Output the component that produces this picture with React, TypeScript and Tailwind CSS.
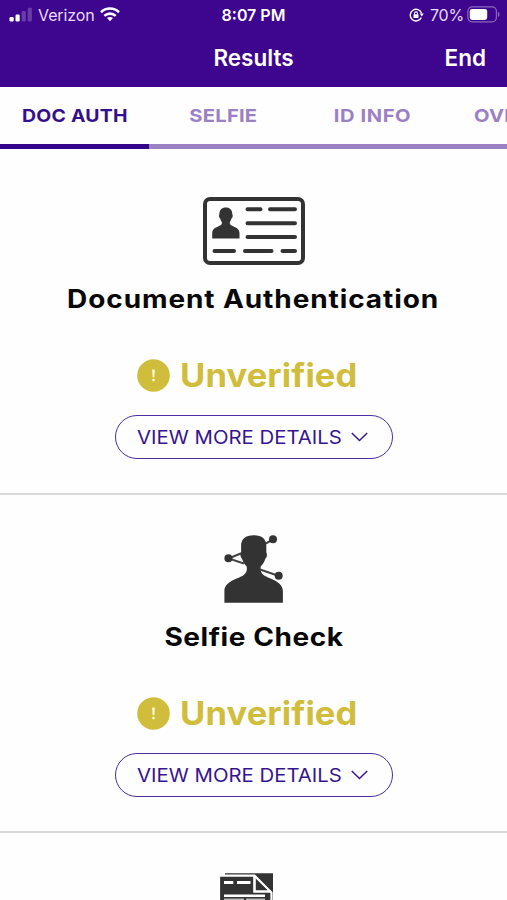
import clsx from "clsx";
import type { ComponentType } from "react";
import { useState } from "react";

type Tab = {
  id: string;
  label: string;
  className: string;
};

type Check = {
  id: string;
  title: string;
  titleClass: string;
  icon: ComponentType;
};

const tabs: Tab[] = [
  { id: "doc", label: "DOC AUTH", className: "scale-x-[1.08] tracking-[0.2px]" },
  { id: "selfie", label: "SELFIE", className: "scale-x-[1.12] tracking-[0.2px]" },
  { id: "info", label: "ID INFO", className: "scale-x-[1.12] tracking-[0.5px]" },
  { id: "overall", label: "OVERALL", className: "scale-x-[1.12] tracking-[0.2px]" },
];

function SignalIcon() {
  return (
    <svg width="24" height="16" viewBox="0 0 24 16" fill="#fff">
      <rect x="0.5" y="10" width="4.2" height="4.5" rx="1.2" />
      <rect x="6.5" y="7.6" width="4.2" height="6.9" rx="1.2" />
      <rect x="12.7" y="4" width="4.2" height="10.5" rx="1.2" opacity="0.22" />
      <rect x="18.7" y="0.8" width="4.2" height="13.7" rx="1.2" opacity="0.22" />
    </svg>
  );
}

function WifiIcon() {
  return (
    <svg width="20" height="15" viewBox="0 0 20 15" fill="none" stroke="#fff" strokeWidth="2.6">
      <path d="M1 5.2C6 0.3 14 0.3 19 5.2" />
      <path d="M4.3 8.9C7.6 5.9 12.4 5.9 15.7 8.9" />
      <path d="M7 11.1C8.8 9.7 11.2 9.7 13 11.1L10 14.2Z" fill="#fff" stroke="none" />
    </svg>
  );
}

function RotationLockIcon() {
  return (
    <svg width="15" height="14" viewBox="0 0 15 14" fill="none" stroke="#fff" strokeWidth="1.4">
      <path d="M12.3 9.6A5.8 5.8 0 1 1 12.6 5.4" />
      <path d="M10.6 5.6H14.8L12.8 8.6Z" fill="#fff" stroke="none" />
      <rect x="4.5" y="6.2" width="5" height="3.7" rx="0.5" fill="#fff" stroke="none" />
      <path d="M5.5 6.4V5.4a1.5 1.5 0 0 1 3 0v1" strokeWidth="1.1" />
    </svg>
  );
}

function BatteryIcon() {
  return (
    <svg width="33" height="17" viewBox="0 0 33 17" fill="none">
      <rect x="0.9" y="0.9" width="28.5" height="15" rx="4.3" stroke="#fff" strokeOpacity="0.4" strokeWidth="1.2" />
      <rect x="2.8" y="2.9" width="17.4" height="11" rx="2.4" fill="#fff" />
      <path d="M31 5.8c2 0.8 2 4.4 0 5.2z" fill="#fff" opacity="0.4" />
    </svg>
  );
}

function IdCardIcon() {
  return (
    <svg width="102" height="68" viewBox="0 0 102 68" fill="none" stroke="#333" strokeLinecap="round">
      <rect x="2" y="2" width="98" height="64" rx="5" strokeWidth="4" />
      <path
        d="M22.8 10.5c4 0 6.6 2.7 6.5 6.8 1 1.3 0.3 3.5-0.8 4.1-0.4 2-1.7 3-1.8 4.4-0.2 4.4 9.8 3.3 9.8 10.2v5.5H9.2V36c0-6.9 10-5.8 9.8-10.2-0.1-1.4-1.4-2.4-1.8-4.4-1.1-0.6-1.8-2.8-0.8-4.1-0.1-4.1 2.4-6.8 6.4-6.8z"
        fill="#333"
        stroke="none"
      />
      <path
        d="M44.5 12.2H57.5M67 12.2H92M44.5 26.2H92M44.5 40H92M11.5 54H31M42 54H68.5M79.5 54H92"
        strokeWidth="4"
      />
    </svg>
  );
}

function SelfieIcon() {
  return (
    <svg width="60" height="69" viewBox="0 0 60 69" fill="#333">
      <path d="M28 17L49 5.5M18 19L4.5 24.5L20 29.5M36 35.5L55 42" fill="none" stroke="#444" strokeWidth="2" />
      <circle cx="49" cy="5.2" r="4" />
      <circle cx="4.4" cy="24.3" r="4" />
      <circle cx="54.7" cy="41.7" r="4" />
      <path d="M29.7 1.2C38 1.2 42.4 5 42.3 12V18.5c1.2 1.5 0.7 5-1 6.2-0.9 3-2.4 5.6-4.6 7.8-0.5 4 0 6.5 3.2 8.7 5.3 3.8 19 5.8 19 15.8V68.7H0.4V57c0-10 13.7-12 19-15.8 3.2-2.2 3.8-4.7 3.3-8.7-2.2-2.2-3.7-4.8-4.6-7.8-1.7-1.2-2.2-4.7-1-6.2V12C17 5 21.4 1.2 29.7 1.2z" />
    </svg>
  );
}

function FormsIcon() {
  return (
    <svg width="54" height="70" viewBox="0 0 54 70" fill="none">
      <path d="M5 1.2H53V66H5z" fill="#333" />
      <path d="M-1 3.7H34.5L51.5 20.8V70H-1z" fill="#333" stroke="#fff" strokeWidth="2.2" />
      <path d="M34.5 4V19.5H51" stroke="#fff" strokeWidth="2.6" />
      <path d="M37 8.5L47.2 18H37z" fill="#333" />
      <path d="M4 10.6H13.3M17 10.6H30.5" stroke="#fff" strokeWidth="3" />
      <path d="M4 23.7H45" stroke="#fff" strokeWidth="2.6" />
      <path d="M4 28H24M26 28H45" stroke="#bbb" strokeWidth="3" />
      <path d="M4 35H45M4 42H45" stroke="#fff" strokeWidth="2.6" />
    </svg>
  );
}

const checks: Check[] = [
  { id: "doc", title: "Document Authentication", titleClass: "tracking-[0.8px]", icon: IdCardIcon },
  { id: "selfie", title: "Selfie Check", titleClass: "tracking-[0.5px]", icon: SelfieIcon },
];

function StatusBar() {
  return (
    <div className="grid h-[30px] grid-cols-3 items-center pr-[7px] pb-px pl-[9px] text-[16px]">
      <div className="flex items-center gap-[5px]">
        <SignalIcon />
        <span className="leading-none tracking-[-0.1px] text-[#e9def8]">Verizon</span>
        <WifiIcon />
      </div>
      <span className="pr-[2px] text-center text-[16px] leading-none font-semibold">8:07 PM</span>
      <div className="flex items-center justify-end">
        <RotationLockIcon />
        <span className="mr-[3px] ml-[6px] leading-none tracking-[-0.2px] text-[#e9def8]">70%</span>
        <BatteryIcon />
      </div>
    </div>
  );
}

function CheckSection({ check }: { check: Check }) {
  const [open, setOpen] = useState(false);
  const Icon = check.icon;

  return (
    <section className="flex h-[338px] flex-col items-center border-b-2 border-[#d9d9d9] pt-[39px]">
      <div className="flex h-[69px] items-center">
        <Icon />
      </div>
      <h2
        className={clsx(
          "mt-[18px] scale-x-[1.12] text-[25px] leading-[32px] font-bold whitespace-nowrap text-[#080808]",
          check.titleClass,
        )}
      >
        {check.title}
      </h2>
      <div className="mt-[41px] mr-[13px] flex h-[40px] items-center gap-[10px] text-[#d1bd3c]">
        <svg width="33" height="33" viewBox="0 0 33 33" className="-mt-px">
          <circle cx="16.5" cy="16.5" r="16.3" fill="currentColor" />
          <path d="M15.1 10.5H17.9L17.3 18.3H15.7z" fill="#fffbe0" />
          <circle cx="16.5" cy="21.1" r="1.3" fill="#fffbe0" />
        </svg>
        <span className="w-[177px] origin-left scale-x-[1.08] text-[32px] leading-none font-bold tracking-[0.1px]">
          Unverified
        </span>
      </div>
      <button
        type="button"
        aria-expanded={open}
        onClick={() => setOpen((s) => !s)}
        className="mt-[19px] flex h-[44px] w-[278px] items-center justify-center gap-[9px] rounded-full border-[1.5px] border-[#4a2fa0] pr-[3px] text-[#36158f]"
      >
        <span className="w-[205px] origin-left scale-x-[1.1] text-left text-[18.5px] leading-none whitespace-nowrap">
          VIEW MORE DETAILS
        </span>
        <svg
          width="17"
          height="10"
          viewBox="0 0 17 10"
          fill="none"
          stroke="currentColor"
          strokeWidth="1.5"
          className={clsx("shrink-0", open && "rotate-180")}
        >
          <path d="M0.8 1L8.5 8.5L16.2 1" />
        </svg>
      </button>
    </section>
  );
}

export default function App() {
  const [active, setActive] = useState("doc");

  return (
    <div className="h-[900px] w-[507px] overflow-hidden bg-[#fefefe] font-['Inter',sans-serif]">
      <header className="h-[87px] bg-[#3e058f] text-white">
        <StatusBar />
        <div className="grid h-[56px] grid-cols-3 items-center pr-[21px] pl-[21px] text-[22.5px] font-semibold">
          <span />
          <h1 className="text-center">Results</h1>
          <button type="button" className="text-right">
            End
          </button>
        </div>
      </header>

      <nav className="flex h-[62px]">
        {tabs.map((tab) => (
          <button
            key={tab.id}
            type="button"
            onClick={() => setActive(tab.id)}
            className={clsx(
              "w-[149px] shrink-0 border-b-5 text-[18px] font-bold whitespace-nowrap",
              active === tab.id ? "border-[#34058a] text-[#34118a]" : "border-[#9c80c4] text-[#9c80c4]",
            )}
          >
            <span className={clsx("inline-block", tab.className)}>{tab.label}</span>
          </button>
        ))}
      </nav>

      <main className="pt-[8px]">
        {checks.map((check) => (
          <CheckSection key={check.id} check={check} />
        ))}
        <section className="flex justify-center pt-[39px] pr-[13px]">
          <FormsIcon />
        </section>
      </main>
    </div>
  );
}
